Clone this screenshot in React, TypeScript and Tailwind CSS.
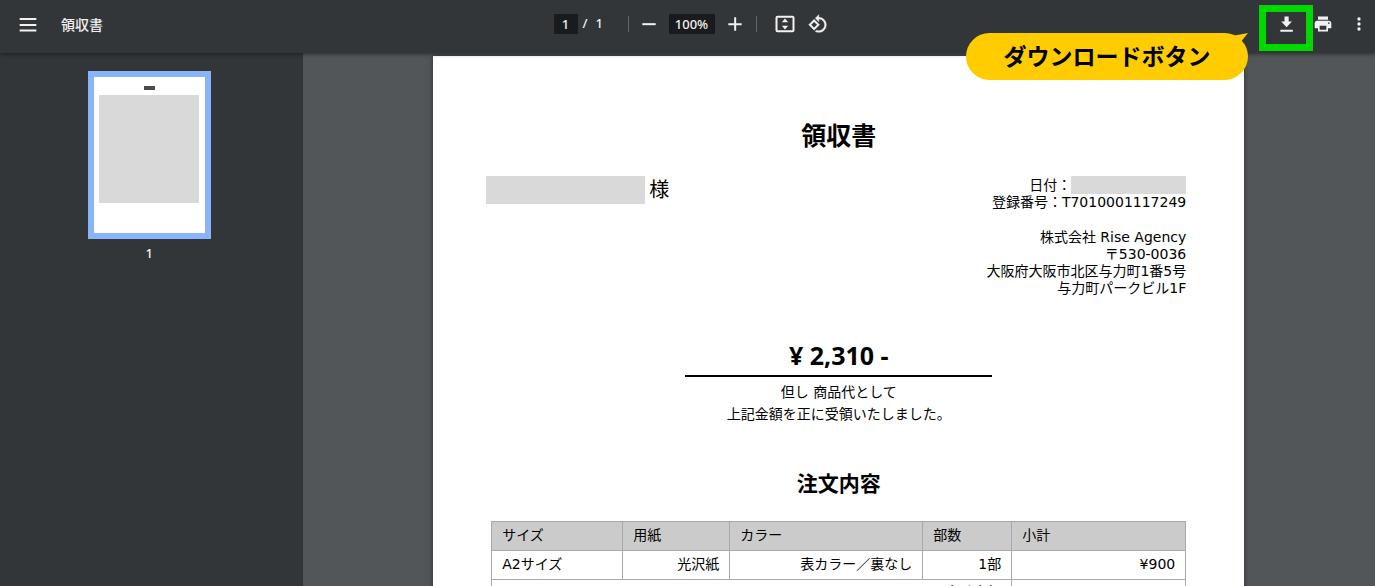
import type { ReactNode } from 'react';

const orderColumns = [
  { label: 'サイズ', width: 'w-[131px]' },
  { label: '用紙', width: 'w-[107px]' },
  { label: 'カラー', width: 'w-[193px]' },
  { label: '部数', width: 'w-[89px]' },
  { label: '小計', width: 'w-auto' },
];

const orderRows = [['A2サイズ', '光沢紙', '表カラー／裏なし', '1部', '¥900']];

function IconButton({ label, children }: { label: string; children: ReactNode }) {
  return (
    <button type="button" aria-label={label} className="flex size-6 shrink-0 items-center justify-center">
      <svg viewBox="0 0 24 24" className="size-5 fill-current" aria-hidden="true">
        {children}
      </svg>
    </button>
  );
}

function Divider() {
  return <span className="h-4 w-px bg-[#65686a]" />;
}

function Toolbar() {
  return (
    <header className="relative z-10 grid h-[53px] shrink-0 grid-cols-[1fr_auto_1fr] items-center bg-[#323639] pr-1 pb-1.5 pl-4 text-[13px] text-[#f1f1f1] shadow-[0_1px_4px_rgba(0,0,0,0.5)]">
      <div className="flex items-center gap-[21px]">
        <IconButton label="メニュー">
          <path d="M2 4.800h20v2.400H2zM2 12h20v2.400H2zM2 18.600h20V21H2z" />
        </IconButton>
        <h1 className="text-sm font-medium">領収書</h1>
      </div>

      <div className="mr-1 flex items-center font-['Noto_Sans','Noto_Sans_CJK_JP',sans-serif] font-medium">
        <input
          aria-label="ページ番号"
          defaultValue="1"
          className="h-5 w-6 bg-[#191b1c] text-center"
        />
        <span className="ml-[5px] flex w-[45px] gap-2">
          <span>/</span>
          <span>1</span>
        </span>
        <Divider />
        <div className="ml-2 flex items-center gap-2">
          <IconButton label="縮小">
            <path d="M4 11h16v2.4H4z" />
          </IconButton>
          <input
            aria-label="ズーム"
            defaultValue="100%"
            className="h-5 w-[46px] bg-[#191b1c] text-center"
          />
          <IconButton label="拡大">
            <path d="M11 4h2.4v7H20v2.4h-6.6V20H11v-6.600H4V11h7z" />
          </IconButton>
        </div>
        <span className="ml-[9px] flex">
          <Divider />
        </span>
        <div className="ml-4 flex items-center gap-[9px]">
          <IconButton label="ページに合わせる">
            <path d="M3 2h18a2.4 2.4 0 0 1 2.4 2.4v15.2A2.4 2.4 0 0 1 21 22H3a2.4 2.4 0 0 1-2.4-2.4V4.4A2.4 2.4 0 0 1 3 2zm0 2.4v15.2h18V4.4zM12 5.500l3.800 4.500H8.200zM12 18.500l-3.800-4.500h7.600z" />
          </IconButton>
          <IconButton label="反時計回りに回転">
            <path
              className="stroke-current"
              strokeWidth="0.5"
              d="M7.34 6.41.86 12.9l6.49 6.48 6.49-6.48zM3.69 12.9l3.66-3.66L11 12.9l-3.66 3.66zm15.67-6.26A8.95 8.95 0 0 0 13 4V.76L8.76 5 13 9.24V6c1.79 0 3.58.68 4.95 2.05a7.007 7.007 0 0 1 0 9.9 6.973 6.973 0 0 1-7.79 1.44l-1.49 1.49C10.02 21.62 11.51 22 13 22c2.3 0 4.61-.88 6.36-2.64a8.98 8.98 0 0 0 0-12.72z"
            />
          </IconButton>
        </div>
      </div>

      <div className="relative flex items-center justify-end gap-3">
        <IconButton label="ダウンロード">
          <path d="M18 9h-4V3H9v6H5l6.5 7zM4 19h15v2.4H4z" />
        </IconButton>
        <IconButton label="印刷">
          <path d="M19 8H5c-1.66 0-3 1.34-3 3v6h4v4h12v-4h4v-6c0-1.66-1.34-3-3-3zm-3 11H8v-5h8zm3-7c-.55 0-1-.45-1-1s.45-1 1-1 1 .45 1 1-.45 1-1 1zM18 3H6v4h12z" />
        </IconButton>
        <IconButton label="その他の操作">
          <path d="M12 8a2 2 0 1 0 0-4 2 2 0 0 0 0 4zm0 2a2 2 0 1 0 0 4 2 2 0 0 0 0-4zm0 6a2 2 0 1 0 0 4 2 2 0 0 0 0-4z" />
        </IconButton>
        <span className="pointer-events-none absolute -top-[7px] right-[58px] h-[46px] w-[54px] border-[7px] border-[#00d900]" />
        <Callout />
      </div>
    </header>
  );
}

function Callout() {
  return (
    <div className="absolute top-[21px] right-[123px] flex h-[47px] w-[282px] items-center justify-center rounded-full bg-[#ffcc00] pb-0.5 text-[23px] font-bold text-black">
      ダウンロードボタン
      <svg viewBox="0 0 16 10" className="absolute top-0 right-0 h-[10px] w-4 fill-[#ffcc00]" aria-hidden="true">
        <path d="M0 3 16 0 8 10z" />
      </svg>
    </div>
  );
}

function Sidebar() {
  return (
    <nav className="flex w-[22%] shrink-0 flex-col items-center bg-[#323639] pr-1 pt-[18px]">
      <button
        type="button"
        aria-label="1ページ目"
        className="flex h-[168px] w-[123px] flex-col items-center border-6 border-[#8ab4f8] bg-white"
      >
        <span className="mt-[9px] h-1 w-[11px] bg-[#4a4a4a]" />
        <span className="mt-[5px] h-[108px] w-[100px] bg-[#d9d9d9]" />
      </button>
      <span className="mt-1 font-['Noto_Sans',sans-serif] text-[13px] leading-5 font-medium text-[#f1f1f1]">1</span>
    </nav>
  );
}

function OrderTable() {
  return (
    <table className="mt-[23px] w-full table-fixed border-collapse border border-[#a9a9a9]">
      <thead>
        <tr className="h-[29px] bg-[#cbcbcb]">
          {orderColumns.map((col) => (
            <th key={col.label} className={`${col.width} border border-[#a9a9a9] px-[10px] pb-0.5 text-left font-normal`}>
              {col.label}
            </th>
          ))}
        </tr>
      </thead>
      <tbody>
        {orderRows.map((row) => (
          <tr key={row[0]} className="h-[29px]">
            {row.map((cell, i) => (
              <td key={i} className={`border border-[#a9a9a9] px-[10px] pb-0.5 ${i === 0 ? 'text-left' : 'text-right'}`}>
                {cell}
              </td>
            ))}
          </tr>
        ))}
        <tr className="h-[29px]">
          <td colSpan={4} className="border border-[#a9a9a9] px-[10px] pt-1 text-right align-top">
            合計金額
          </td>
          <td className="border border-[#a9a9a9]" />
        </tr>
      </tbody>
    </table>
  );
}

function Receipt() {
  return (
    <article className="mx-auto mt-[3px] min-h-[1100px] w-full max-w-[811px] bg-white px-[58px] pt-[63px] font-['DejaVu_Sans','Noto_Sans_CJK_JP',sans-serif] text-sm leading-[17px] text-black shadow-[0_0_4px_rgba(0,0,0,0.5)]">
      <h2 className="text-center text-[25px] leading-9 font-bold">領収書</h2>

      <div className="mt-[21px] flex items-start justify-between">
        <div className="-ml-[5px] flex items-center gap-1 text-xl leading-7">
          <span className="h-7 w-[159px] bg-[#d9d9d9]" />
          様
        </div>
        <div className="flex flex-col items-end">
          <div className="flex items-center">
            日付：
            <span className="h-[18px] w-[115px] bg-[#d9d9d9]" />
          </div>
          <p>登録番号：T7010001117249</p>
          <address className="mt-[18px] text-right not-italic">
            株式会社 Rise Agency
            <br />
            〒530-0036
            <br />
            大阪府大阪市北区与力町1番5号
            <br />
            与力町パークビル1F
          </address>
        </div>
      </div>

      <div className="mx-auto mt-[42px] w-[307px] border-b-2 border-black pb-1 text-center font-['Noto_Sans','Noto_Sans_CJK_JP',sans-serif] text-[25px] leading-8 font-bold">
        ¥ 2,310 -
      </div>
      <p className="mt-1 text-center leading-[22px]">
        但し 商品代として
        <br />
        上記金額を正に受領いたしました。
      </p>

      <h3 className="mt-[45px] text-center text-[21px] leading-7 font-bold">注文内容</h3>
      <OrderTable />
    </article>
  );
}

export default function App() {
  return (
    <div className="flex h-screen flex-col overflow-hidden bg-[#525659] font-['Noto_Sans_CJK_JP',sans-serif]">
      <Toolbar />
      <div className="flex min-h-0 flex-1">
        <Sidebar />
        <main className="min-w-0 flex-1 overflow-hidden">
          <Receipt />
        </main>
      </div>
    </div>
  );
}
